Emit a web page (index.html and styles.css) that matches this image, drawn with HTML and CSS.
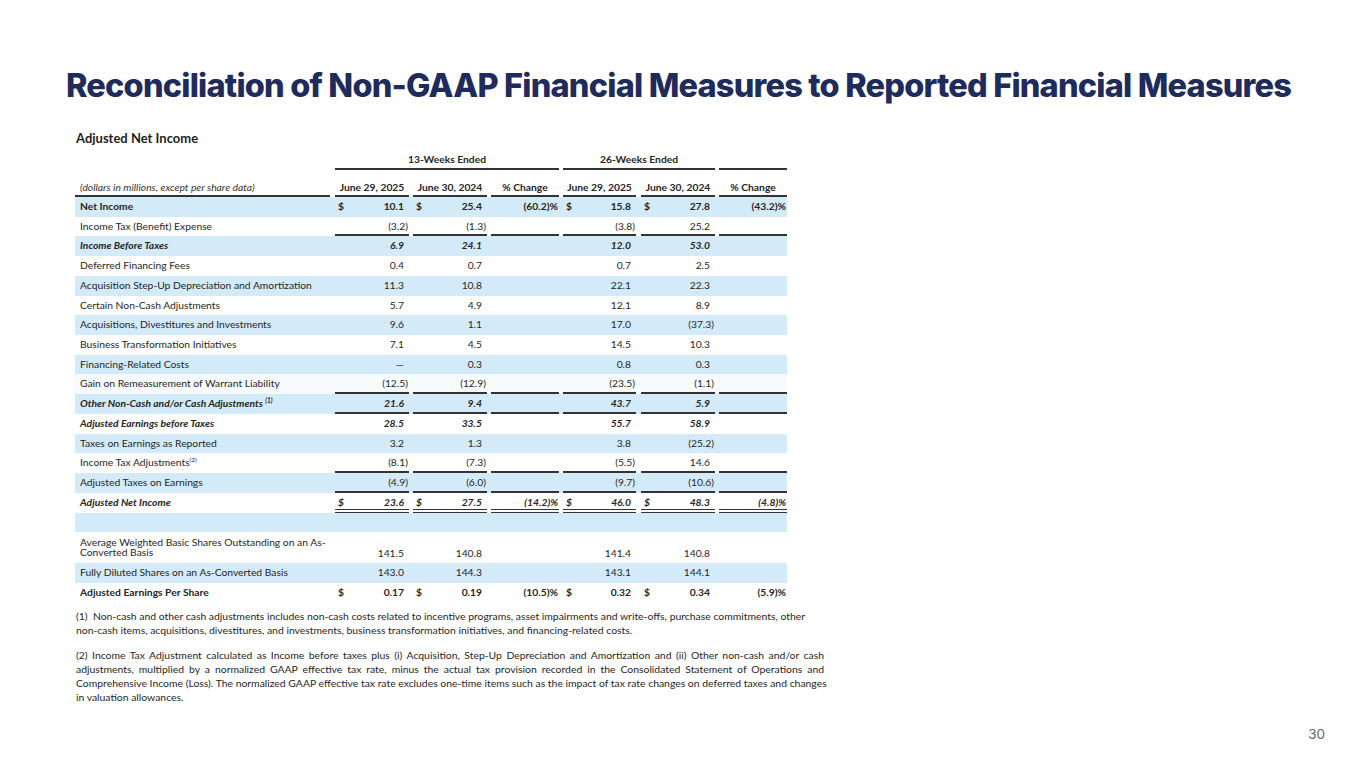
FILE: index.html
```html
<!DOCTYPE html>
<html lang="en">
<head>
<meta charset="utf-8">
<title>Reconciliation of Non-GAAP Financial Measures</title>
<link rel="stylesheet" href="styles.css">
</head>
<body>
<div class="slide">
  <h1 class="title">Reconciliation of Non-GAAP Financial Measures to Reported Financial Measures</h1>
  <div class="sheet">
    <h2 class="sheet-title">Adjusted Net Income</h2>
    <table class="fin">
      <colgroup>
        <col class="c-label"><col class="c1"><col class="c2"><col class="c3"><col class="c4"><col class="c5"><col class="c6">
      </colgroup>
      <thead>
        <tr class="grp">
          <th></th>
          <th colspan="3" class="g1"><div class="gl">13-Weeks Ended</div></th>
          <th colspan="2" class="g2"><div class="gl">26-Weeks Ended</div></th>
          <th class="g2"><div class="gl">&nbsp;</div></th>
        </tr>
        <tr class="sub">
          <th class="lab"><div class="u">(dollars in millions, except per share data)</div></th>
          <th><div class="u">June 29, 2025</div></th>
          <th><div class="u">June 30, 2024</div></th>
          <th><div class="u">% Change</div></th>
          <th><div class="u">June 29, 2025</div></th>
          <th><div class="u">June 30, 2024</div></th>
          <th><div class="u">% Change</div></th>
        </tr>
      </thead>
      <tbody>
        <tr class="b bold">
          <td class="lab">Net Income</td>
          <td><div class="v"><span>$</span><span>10.1</span></div></td>
          <td><div class="v"><span>$</span><span>25.4</span></div></td>
          <td><div class="p">(60.2)%</div></td>
          <td><div class="v"><span>$</span><span>15.8</span></div></td>
          <td><div class="v"><span>$</span><span>27.8</span></div></td>
          <td><div class="p">(43.2)%</div></td>
        </tr>
        <tr class="w ul">
          <td class="lab">Income Tax (Benefit) Expense</td>
          <td><div class="v"><span></span><span>(3.2<span class="rp">)</span></span></div></td>
          <td><div class="v"><span></span><span>(1.3<span class="rp">)</span></span></div></td>
          <td><div class="p"></div></td>
          <td><div class="v"><span></span><span>(3.8<span class="rp">)</span></span></div></td>
          <td><div class="v"><span></span><span>25.2</span></div></td>
          <td><div class="p"></div></td>
        </tr>
        <tr class="b bi">
          <td class="lab">Income Before Taxes</td>
          <td><div class="v"><span></span><span>6.9</span></div></td>
          <td><div class="v"><span></span><span>24.1</span></div></td>
          <td><div class="p"></div></td>
          <td><div class="v"><span></span><span>12.0</span></div></td>
          <td><div class="v"><span></span><span>53.0</span></div></td>
          <td><div class="p"></div></td>
        </tr>
        <tr class="w">
          <td class="lab">Deferred Financing Fees</td>
          <td><div class="v"><span></span><span>0.4</span></div></td>
          <td><div class="v"><span></span><span>0.7</span></div></td>
          <td><div class="p"></div></td>
          <td><div class="v"><span></span><span>0.7</span></div></td>
          <td><div class="v"><span></span><span>2.5</span></div></td>
          <td><div class="p"></div></td>
        </tr>
        <tr class="b">
          <td class="lab">Acquisition Step-Up Depreciation and Amortization</td>
          <td><div class="v"><span></span><span>11.3</span></div></td>
          <td><div class="v"><span></span><span>10.8</span></div></td>
          <td><div class="p"></div></td>
          <td><div class="v"><span></span><span>22.1</span></div></td>
          <td><div class="v"><span></span><span>22.3</span></div></td>
          <td><div class="p"></div></td>
        </tr>
        <tr class="w">
          <td class="lab">Certain Non-Cash Adjustments</td>
          <td><div class="v"><span></span><span>5.7</span></div></td>
          <td><div class="v"><span></span><span>4.9</span></div></td>
          <td><div class="p"></div></td>
          <td><div class="v"><span></span><span>12.1</span></div></td>
          <td><div class="v"><span></span><span>8.9</span></div></td>
          <td><div class="p"></div></td>
        </tr>
        <tr class="b">
          <td class="lab">Acquisitions, Divestitures and Investments</td>
          <td><div class="v"><span></span><span>9.6</span></div></td>
          <td><div class="v"><span></span><span>1.1</span></div></td>
          <td><div class="p"></div></td>
          <td><div class="v"><span></span><span>17.0</span></div></td>
          <td><div class="v"><span></span><span>(37.3<span class="rp">)</span></span></div></td>
          <td><div class="p"></div></td>
        </tr>
        <tr class="w">
          <td class="lab">Business Transformation Initiatives</td>
          <td><div class="v"><span></span><span>7.1</span></div></td>
          <td><div class="v"><span></span><span>4.5</span></div></td>
          <td><div class="p"></div></td>
          <td><div class="v"><span></span><span>14.5</span></div></td>
          <td><div class="v"><span></span><span>10.3</span></div></td>
          <td><div class="p"></div></td>
        </tr>
        <tr class="b">
          <td class="lab">Financing-Related Costs</td>
          <td><div class="v"><span></span><span>—</span></div></td>
          <td><div class="v"><span></span><span>0.3</span></div></td>
          <td><div class="p"></div></td>
          <td><div class="v"><span></span><span>0.8</span></div></td>
          <td><div class="v"><span></span><span>0.3</span></div></td>
          <td><div class="p"></div></td>
        </tr>
        <tr class="pale ul">
          <td class="lab">Gain on Remeasurement of Warrant Liability</td>
          <td><div class="v"><span></span><span>(12.5<span class="rp">)</span></span></div></td>
          <td><div class="v"><span></span><span>(12.9<span class="rp">)</span></span></div></td>
          <td><div class="p"></div></td>
          <td><div class="v"><span></span><span>(23.5<span class="rp">)</span></span></div></td>
          <td><div class="v"><span></span><span>(1.1<span class="rp">)</span></span></div></td>
          <td><div class="p"></div></td>
        </tr>
        <tr class="b bi ul">
          <td class="lab">Other Non-Cash and/or Cash Adjustments <sup>(1)</sup></td>
          <td><div class="v"><span></span><span>21.6</span></div></td>
          <td><div class="v"><span></span><span>9.4</span></div></td>
          <td><div class="p"></div></td>
          <td><div class="v"><span></span><span>43.7</span></div></td>
          <td><div class="v"><span></span><span>5.9</span></div></td>
          <td><div class="p"></div></td>
        </tr>
        <tr class="w bi">
          <td class="lab">Adjusted Earnings before Taxes</td>
          <td><div class="v"><span></span><span>28.5</span></div></td>
          <td><div class="v"><span></span><span>33.5</span></div></td>
          <td><div class="p"></div></td>
          <td><div class="v"><span></span><span>55.7</span></div></td>
          <td><div class="v"><span></span><span>58.9</span></div></td>
          <td><div class="p"></div></td>
        </tr>
        <tr class="b">
          <td class="lab">Taxes on Earnings as Reported</td>
          <td><div class="v"><span></span><span>3.2</span></div></td>
          <td><div class="v"><span></span><span>1.3</span></div></td>
          <td><div class="p"></div></td>
          <td><div class="v"><span></span><span>3.8</span></div></td>
          <td><div class="v"><span></span><span>(25.2<span class="rp">)</span></span></div></td>
          <td><div class="p"></div></td>
        </tr>
        <tr class="w ul">
          <td class="lab">Income Tax Adjustments<sup>(2)</sup></td>
          <td><div class="v"><span></span><span>(8.1<span class="rp">)</span></span></div></td>
          <td><div class="v"><span></span><span>(7.3<span class="rp">)</span></span></div></td>
          <td><div class="p"></div></td>
          <td><div class="v"><span></span><span>(5.5<span class="rp">)</span></span></div></td>
          <td><div class="v"><span></span><span>14.6</span></div></td>
          <td><div class="p"></div></td>
        </tr>
        <tr class="b ul">
          <td class="lab">Adjusted Taxes on Earnings</td>
          <td><div class="v"><span></span><span>(4.9<span class="rp">)</span></span></div></td>
          <td><div class="v"><span></span><span>(6.0<span class="rp">)</span></span></div></td>
          <td><div class="p"></div></td>
          <td><div class="v"><span></span><span>(9.7<span class="rp">)</span></span></div></td>
          <td><div class="v"><span></span><span>(10.6<span class="rp">)</span></span></div></td>
          <td><div class="p"></div></td>
        </tr>
        <tr class="w bi dbl">
          <td class="lab">Adjusted Net Income</td>
          <td><div class="v"><span>$</span><span>23.6</span></div></td>
          <td><div class="v"><span>$</span><span>27.5</span></div></td>
          <td><div class="p">(14.2)%</div></td>
          <td><div class="v"><span>$</span><span>46.0</span></div></td>
          <td><div class="v"><span>$</span><span>48.3</span></div></td>
          <td><div class="p">(4.8)%</div></td>
        </tr>
        <tr class="b spacer">
          <td colspan="7"></td>
        </tr>
        <tr class="w tall">
          <td class="lab">Average Weighted Basic Shares Outstanding on an As-Converted Basis</td>
          <td><div class="v"><span></span><span>141.5</span></div></td>
          <td><div class="v"><span></span><span>140.8</span></div></td>
          <td><div class="p"></div></td>
          <td><div class="v"><span></span><span>141.4</span></div></td>
          <td><div class="v"><span></span><span>140.8</span></div></td>
          <td><div class="p"></div></td>
        </tr>
        <tr class="b">
          <td class="lab">Fully Diluted Shares on an As-Converted Basis</td>
          <td><div class="v"><span></span><span>143.0</span></div></td>
          <td><div class="v"><span></span><span>144.3</span></div></td>
          <td><div class="p"></div></td>
          <td><div class="v"><span></span><span>143.1</span></div></td>
          <td><div class="v"><span></span><span>144.1</span></div></td>
          <td><div class="p"></div></td>
        </tr>
        <tr class="w bold">
          <td class="lab">Adjusted Earnings Per Share</td>
          <td><div class="v"><span>$</span><span>0.17</span></div></td>
          <td><div class="v"><span>$</span><span>0.19</span></div></td>
          <td><div class="p">(10.5)%</div></td>
          <td><div class="v"><span>$</span><span>0.32</span></div></td>
          <td><div class="v"><span>$</span><span>0.34</span></div></td>
          <td><div class="p">(5.9)%</div></td>
        </tr>
      </tbody>
    </table>
    <div class="notes">
      <p class="note">
        <span class="ln">(1)&nbsp; Non-cash and other cash adjustments includes non-cash costs related to incentive programs, asset impairments and write-offs, purchase commitments, other</span>
        <span class="ln">non-cash items, acquisitions, divestitures, and investments, business transformation initiatives, and financing-related costs.</span>
      </p>
      <p class="note just">
        <span class="ln">(2) Income Tax Adjustment calculated as Income before taxes plus (i) Acquisition, Step-Up Depreciation and Amortization and (ii) Other non-cash and/or cash</span>
        <span class="ln">adjustments, multiplied by a normalized GAAP effective tax rate, minus the actual tax provision recorded in the Consolidated Statement of Operations and</span>
        <span class="ln">Comprehensive Income (Loss). The normalized GAAP effective tax rate excludes one-time items such as the impact of tax rate changes on deferred taxes and changes</span>
        <span class="ln last">in valuation allowances.</span>
      </p>
    </div>
  </div>
  <div class="page-num">30</div>
</div>
</body>
</html>
```

FILE: styles.css
```css
* { box-sizing: border-box; }
html, body { margin: 0; padding: 0; background: #ffffff; }
body { font-family: Inter, "Noto Sans", sans-serif; }

.slide {
  position: relative;
  width: 1365px;
  height: 768px;
  overflow: hidden;
  background: #ffffff;
}

.title {
  margin: 0;
  padding: 66px 0 0 66px;
  font-family: Inter, "Noto Sans", sans-serif;
  font-weight: 800;
  font-size: 32.5px;
  line-height: 40px;
  letter-spacing: -0.81px;
  color: #1f2b5b;
  white-space: nowrap;
}

.sheet {
  margin: 24px 0 0 75px;
  width: 760px;
  font-family: Lato, "Open Sans", sans-serif;
  font-size: 10.3px;
  color: #262626;
}

.sheet-title {
  margin: 0 0 0 1px;
  font-size: 13px;
  line-height: 16px;
  font-weight: 700;
  color: #1e1e1e;
}

.fin {
  margin-top: 6px;
  width: 712px;
  border-collapse: collapse;
  table-layout: fixed;
}
.c-label { width: 255px; }
.c1 { width: 79px; }
.c2 { width: 78px; }
.c3 { width: 72px; }
.c4 { width: 77px; }
.c5 { width: 79px; }
.c6 { width: 72px; }

.fin th, .fin td {
  padding: 0 0 0 4px;
  vertical-align: bottom;
  white-space: nowrap;
}
.fin th.lab, .fin td.lab { padding-left: 0; }
.fin th:nth-child(2), .fin td:nth-child(2),
.fin th:nth-child(6), .fin td:nth-child(6) { padding-left: 5px; }

.grp th { font-weight: 700; text-align: center; }
.grp .g1, .grp .g2 { padding-left: 4px; }
.grp th.g1 { padding-left: 5px; }
.gl {
  height: 18px;
  line-height: 14px;
  border-bottom: 2px solid #333;
}

.sub th { font-weight: 700; text-align: center; }
.sub .u {
  height: 27px;
  line-height: 34px;
  border-bottom: 2px solid #333;
}
.sub th.lab { text-align: left; }
.sub th.lab .u { font-weight: 400; font-style: italic; padding-left: 5px; color: #333; }

.fin tbody tr { height: 19.73px; }
.fin tbody tr.b { background: #d3ebf8; }
.fin tbody tr.pale { background: #f7fbfd; }
.fin tbody tr.w { background: #ffffff; }

.fin td.lab { padding-left: 5px; line-height: 19.7px; vertical-align: middle; }
.fin .v, .fin .p {
  height: 19.73px;
  line-height: 19px;
  border-bottom: 2px solid transparent;
}
.fin .v {
  display: flex;
  justify-content: space-between;
  padding: 0 5px 0 3px;
}
.fin .p { text-align: right; padding-right: 1px; }
.rp { margin-right: -4px; }

.fin tr.ul .v, .fin tr.ul .p { border-bottom-color: #333; }
.fin tr.dbl .v, .fin tr.dbl .p { border-bottom: 4px double #333; }

.fin tr.bold td { font-weight: 700; }
.fin tr.bi td { font-weight: 700; font-style: italic; }

.fin sup { font-size: 6.5px; line-height: 0; vertical-align: 4px; }

.fin tr.spacer { height: 19.73px; }
.fin tr.tall { height: 31px; }
.fin tr.tall td.lab {
  white-space: normal;
  line-height: 10px;
  padding: 4px 0 6px 5px;
  vertical-align: bottom;
}

.notes { margin-top: 6px; width: 749px; }
.note {
  margin: 0 0 11px 1px;
  font-size: 10.4px;
  line-height: 14px;
  color: #262626;
}
.note .ln { display: block; white-space: nowrap; }
.note.just .ln {
  text-align: justify;
  text-align-last: justify;
}
.note.just .ln.last { text-align-last: left; }

.page-num {
  position: absolute;
  right: 40px;
  top: 726px;
  font-family: Inter, "Noto Sans", sans-serif;
  font-size: 13.5px;
  color: #666;
}
```
